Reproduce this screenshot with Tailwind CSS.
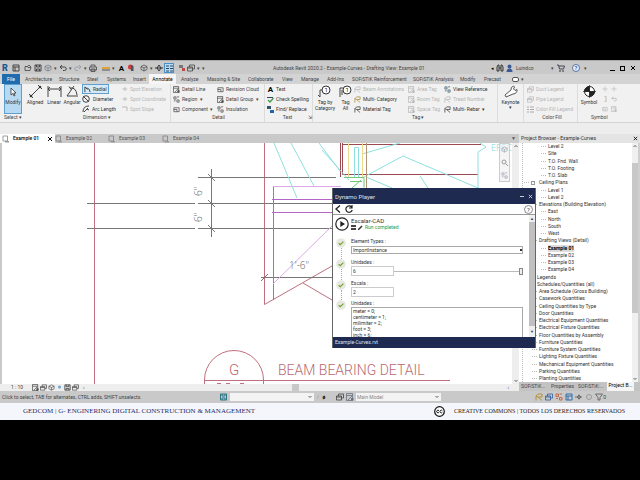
<!DOCTYPE html>
<html lang="es">
<head>
    <meta charset="UTF-8">
    <meta name="viewport" content="width=device-width, initial-scale=1.0">
    <script src="https://cdn.jsdelivr.net/npm/@tailwindcss/browser@4"></script>
    <title>Autodesk Revit 2020.2</title>
</head>
<body class="bg-black">

    <!-- icon set -->
    <svg class="hidden">
        <symbol id="doc" viewBox="0 0 8 8"><path d="M1 1h6v6H1zM1 3h6M3 3v4" fill="none" stroke="currentColor"/></symbol>
        <symbol id="open" viewBox="0 0 8 8"><path d="M1 6.500V2.500h2l1 1h3L6 6.500zM3 3l2-2 2 2" fill="none" stroke="currentColor" stroke-width=".8"/></symbol>
        <symbol id="save" viewBox="0 0 8 8"><path d="M1 1h6v6H1zM2.500 1v2h3V1M2.500 7V5h3v2" fill="none" stroke="currentColor"/></symbol>
        <symbol id="cube" viewBox="0 0 8 8"><path d="M4 1l3 1.500v3L4 7 1 5.500v-3zM1 2.500L4 4l3-1.500M4 4v3" fill="none" stroke="currentColor" stroke-width=".7"/></symbol>
        <symbol id="undo" viewBox="0 0 8 8"><path d="M3 1L1 3l2 2M1 3h4.500a1.500 1.500 0 0 1 0 3.500H4" fill="none" stroke="currentColor"/></symbol>
        <symbol id="redo" viewBox="0 0 8 8"><path d="M5 1l2 2-2 2M7 3H2.500a1.500 1.500 0 0 0 0 3.500H4" fill="none" stroke="currentColor"/></symbol>
        <symbol id="print" viewBox="0 0 8 8"><path d="M2 3V1h4v2M.500 3h7v3h-7zM2 5h4v2.500H2z" fill="none" stroke="currentColor" stroke-width=".8"/></symbol>
        <symbol id="rect" viewBox="0 0 8 8"><path d="M1 2h6v4.500H1zM1 4h3.500v2.500" fill="none" stroke="currentColor" stroke-width=".8"/></symbol>
        <symbol id="windows" viewBox="0 0 8 8"><path d="M.500 3h5v4h-5zM2.500 3V1h5v4h-2M.500 4h5" fill="none" stroke="currentColor" stroke-width=".8"/></symbol>
        <symbol id="detail" viewBox="0 0 8 8"><path d="M.500.500h6v7h-6zM.500 2.500h6M2 7l4-4" fill="none" stroke="currentColor" stroke-width=".8"/><path d="M5 5h2.500v2.500H5z" fill="currentColor"/></symbol>
        <symbol id="view" viewBox="0 0 8 8"><path d="M1 1h4.500v5H1z" fill="none" stroke="#777" stroke-width=".7"/><path d="M3 6h4v1.500H3z" fill="#999"/></symbol>
        <symbol id="spot" viewBox="0 0 8 8"><path d="M0 4h7M4 1.500v5M2 4l2-2 2 2-2 2z" fill="none" stroke="currentColor" stroke-width=".7"/></symbol>
        <symbol id="tag" viewBox="0 0 8 8"><path d="M1 7.500V3M1 3l2-2h4v3H3zM3 4l4 3.500" fill="none" stroke="currentColor" stroke-width=".8"/></symbol>
        <symbol id="pair" viewBox="0 0 8 8"><path d="M1 1h2.500v2.500H1zM4.500 4.500H7V7H4.500zM4.500 1H7M1 5.500h2" fill="none" stroke="currentColor" stroke-width=".8"/></symbol>
        <symbol id="check" viewBox="0 0 10 10"><circle cx="5" cy="5" r="4.800" fill="#e6e9e1"/><path d="M2.700 5.200L4.300 6.700 7.400 3.600" fill="none" stroke="#76a32c" stroke-width="1.200"/></symbol>
        <symbol id="plus" viewBox="0 0 8 8"><path d="M4 .500v7M.500 4h7" fill="none" stroke="currentColor" stroke-width=".8"/></symbol>
        <symbol id="up" viewBox="0 0 6 6"><path d="M1.500 4L3 2.500 4.500 4" fill="none" stroke="#555" stroke-width=".9"/></symbol>
        <symbol id="down" viewBox="0 0 6 6"><path d="M1.500 2L3 3.500 4.500 2" fill="none" stroke="#555" stroke-width=".9"/></symbol>
        <symbol id="close" viewBox="0 0 6 6"><path d="M1 1l4 4M5 1L1 5" fill="none" stroke="currentColor"/></symbol>
    </svg>

    <div class="min-h-screen flex flex-col pt-[60px] font-['Roboto','Open_Sans',sans-serif] text-[5px] leading-[7px] text-[#444] whitespace-nowrap">

        <!-- title bar -->
        <header class="bg-[#c9c9c9] h-[14px] flex items-center pt-px px-[2px] border-t border-[#aaa]">
            <div class="flex items-center w-[271px] shrink-0">
                <span class="w-[10px] text-[9px] font-black text-[#1d5a92]">R</span>
                <svg class="size-2 mr-1"><use href="#doc"/></svg>
                <svg class="size-2 mr-[2px]"><use href="#open"/></svg>
                <svg class="size-2 mr-[2px]"><use href="#save"/></svg>
                <svg class="size-2 text-gray-500"><use href="#cube"/></svg><span class="w-[7px] text-center">▾</span>
                <svg class="size-2"><use href="#undo"/></svg><span class="w-[7px] text-center">▾</span>
                <svg class="size-2 text-gray-400"><use href="#redo"/></svg><span class="w-[7px] text-center">▾</span>
                <svg class="size-2 mr-[5px]"><use href="#print"/></svg>
                <svg class="w-2 h-[5px]" viewBox="0 0 8 5"><path d="M0 1h8v2H0z" fill="#d9a53c"/><path d="M0 4h8" stroke="#555"/></svg><span class="w-[7px] text-center">▾</span>
                <span class="text-[8px] font-bold w-[9px] text-center text-black">A</span>
                <svg class="w-[6px] h-2 mx-[2px]" viewBox="0 0 6 8"><circle cx="2.500" cy="3" r="2.500" fill="#cf3a3a"/><path d="M3 1v6h2.500V2z" fill="#456"/></svg>
                <svg class="size-2 ml-1"><use href="#cube"/></svg><span class="w-[7px] text-center">▾</span>
                <svg class="size-2 mr-px" viewBox="0 0 8 8"><path d="M0 4h8M4 1l2 3-2 3-2-3z" fill="none" stroke="#333"/></svg>
                <span class="w-[10px] h-[10px] bg-[#b9dcf5] border border-[#4a90c8] flex items-center justify-center text-[#24476b]"><svg class="w-[7px] h-[7px]" viewBox="0 0 7 7"><path d="M0 1h3M4 1h3M0 3.500h3M4 3.500h3M0 6h3M4 6h3" stroke="currentColor"/></svg></span>
                <svg class="size-2 ml-1" viewBox="0 0 8 8"><path d="M1 1h4v3H1z" fill="#777"/><path d="M4 4h3v3H4z" fill="#c84545"/></svg>
                <svg class="size-2 ml-px"><use href="#windows"/></svg><span class="w-[7px] text-center">▾</span>
                <span>▾</span>
            </div>
            <h1>Autodesk Revit 2020.2 - Example-Curves - Drafting View: Example 01</h1>
            <div class="ml-auto flex items-center">
                <span class="text-black mr-[2px]">◂</span>
                <svg class="w-2 h-2 mr-[2px]" viewBox="0 0 8 8"><path d="M1 7V3l1-2h1v6zM5 7V1h1l1 2v4zM3 4h2" fill="none" stroke="#333"/></svg>
                <svg class="w-[7px] h-2" viewBox="0 0 7 8"><circle cx="3.500" cy="2.500" r="2" fill="#3c5b96"/><path d="M.500 8q0-3.500 3-3.500t3 3.500z" fill="#3c5b96"/></svg>
                <span class="ml-[3px] w-[35px]">Luindco</span>
                <span class="w-[6px]">▾</span>
                <svg class="size-2" viewBox="0 0 8 8"><path d="M0 1h1.500l1 4h4l1-3H2" fill="none" stroke="#445"/><circle cx="3" cy="7" r=".7"/><circle cx="6" cy="7" r=".7"/></svg>
                <svg class="size-2 ml-[7px]" viewBox="0 0 8 8"><circle cx="4" cy="4" r="3.500" fill="#eef" stroke="#345d8c" stroke-width=".8"/><text x="2.600" y="6" font-size="5.500" font-weight="bold" fill="#345d8c">?</text></svg>
                <span class="w-[30px] pl-1">▾</span>
                <button aria-label="Minimize" class="w-[5px] h-[5px] border-b border-black mr-[5px]"></button>
                <button aria-label="Restore" class="w-[5px] h-[5px] border border-black mr-[5px]"></button>
                <button aria-label="Close" class="size-[6px] text-black mr-[2px]"><svg class="size-full"><use href="#close"/></svg></button>
            </div>
        </header>

        <!-- ribbon tabs -->
        <nav class="bg-[#d3d3d3] h-[10px] flex items-stretch leading-[10px] pl-[2px]">
            <a href="#" class="w-[18px] bg-[#1f6cae] text-white text-center">File</a>
            <a href="#" class="w-[39px] pl-[5px]">Architecture</a>
            <a href="#" class="w-[28px]">Structure</a>
            <a href="#" class="w-[20px]">Steel</a>
            <a href="#" class="w-[26px]">Systems</a>
            <a href="#" class="w-[16px]">Insert</a>
            <a href="#" class="w-[27px] bg-[#f5f5f5] text-black text-center">Annotate</a>
            <a href="#" class="w-[31px] pl-[5px]">Analyze</a>
            <a href="#" class="w-[41px]">Massing &amp; Site</a>
            <a href="#" class="w-[34px]">Collaborate</a>
            <a href="#" class="w-[19px]">View</a>
            <a href="#" class="w-[26px]">Manage</a>
            <a href="#" class="w-[25px]">Add-Ins</a>
            <a href="#" class="w-[61px]">SOFiSTiK Reinforcement</a>
            <a href="#" class="w-[47px]">SOFiSTiK Analysis</a>
            <a href="#" class="w-[24px]">Modify</a>
            <a href="#" class="w-[28px]">Precast</a>
            <span class="flex items-center gap-[2px]"><i class="w-[7px] h-[5px] border border-[#555] rounded-[2px] bg-white"></i>▾</span>
        </nav>

        <!-- ribbon -->
        <section class="bg-[#ededed] h-[50px]">
            <div class="h-[39px] bg-[#f1f1f1] border-b border-[#d4d4d4] flex">

                <div class="w-[24px] shrink-0 flex flex-col pl-1">
                    <button class="w-[18px] h-[30px] bg-[#b8d9f2] border border-[#5e9fce] flex flex-col items-center text-[#334]">
                        <svg class="w-[8px] h-[10px] mt-[2px] mb-[2px]" viewBox="0 0 8 10"><path d="M2 1v7l1.800-1.600L5 9l1-.500-1.200-2.500H7z" fill="#fff" stroke="#333" stroke-width=".8"/></svg>
                        Modify
                    </button>
                    <span>Select ▾</span>
                </div>

                <div class="w-[147px] shrink-0 flex flex-col border-r border-[#dcdcdc]">
                    <div class="h-[30px] flex">
                        <button class="w-[22px] flex flex-col items-center text-[#333]"><svg class="w-[13px] h-[13px] mt-px mb-px" viewBox="0 0 13 13"><path d="M2 11l9-9M0 9l4 4M9 0l4 4" fill="none" stroke="#444"/><circle cx="2" cy="11" r="1.300" fill="#333"/><circle cx="11" cy="2" r="1.300" fill="#333"/></svg>Aligned</button>
                        <button class="w-[16px] flex flex-col items-center text-[#333]"><svg class="w-[15px] h-[13px] mt-px mb-px" viewBox="0 0 15 13"><path d="M1 1v11M14 1v11M1 4h13M3 2L1 4l2 2M12 2l2 2-2 2" fill="none" stroke="#444"/></svg>Linear</button>
                        <button class="w-[20px] flex flex-col items-center text-[#333]"><svg class="w-[13px] h-[13px] mt-px mb-px" viewBox="0 0 13 13"><path d="M8 1L1 11h11M4 3q6-1 7 7M3 1.500l2 3" fill="none" stroke="#444"/></svg>Angular</button>
                        <div class="w-[37px] grid grid-rows-3 items-center text-[#333]">
                            <button class="flex items-center w-[27px] h-[10px] bg-[#d5e9f8] border border-[#5e9fce] pl-px"><svg class="w-[7px] h-[7px] mr-[2px]" viewBox="0 0 8 8"><path d="M1 7V1l3 3M3 2q4 1 4 5" fill="none" stroke="#333"/></svg>Radial</button>
                            <button class="flex items-center"><svg class="size-2 mr-[3px]" viewBox="0 0 8 8"><circle cx="4" cy="4" r="3.300" fill="none" stroke="#444"/><path d="M1 1l6 6" stroke="#444"/></svg>Diameter</button>
                            <button class="flex items-center"><svg class="size-2 mr-[2px]" viewBox="0 0 8 8"><path d="M1 7q0-6 6-6M2 7l4-4M5 4l2 1" fill="none" stroke="#444"/></svg>Arc Length</button>
                        </div>
                        <div class="grid grid-rows-3 items-center text-[#b5b5b5] pl-[3px]">
                            <button disabled class="flex items-center gap-[2px]"><svg class="w-[6px] h-[6px]"><use href="#spot"/></svg>Spot Elevation</button>
                            <button disabled class="flex items-center gap-[2px]"><svg class="w-[6px] h-[6px]"><use href="#spot"/></svg>Spot Coordinate</button>
                            <button disabled class="flex items-center gap-[2px]"><svg class="w-[6px] h-[6px]" viewBox="0 0 6 6"><path d="M0 1h5v4" fill="none" stroke="#bbb"/></svg>Spot Slope</button>
                        </div>
                    </div>
                    <span class="text-center">Dimension ▾</span>
                </div>

                <div class="w-[94px] shrink-0 flex flex-col border-r border-[#dcdcdc] pl-[2px]">
                    <div class="h-[30px] flex">
                        <div class="w-[44px] grid grid-rows-3 items-center">
                            <button class="flex items-center gap-[2px]"><svg class="w-[7px] h-[7px]"><use href="#detail"/></svg>Detail Line</button>
                            <button class="flex items-center gap-[2px]"><svg class="w-[7px] h-[7px]"><use href="#pair"/></svg>Region&nbsp; ▾</button>
                            <button class="flex items-center gap-[2px]"><svg class="w-[7px] h-[7px]"><use href="#rect"/></svg>Component&nbsp; ▾</button>
                        </div>
                        <div class="grid grid-rows-3 items-center">
                            <button class="flex items-center gap-[2px]"><svg class="w-[7px] h-[7px]"><use href="#rect"/></svg>Revision Cloud</button>
                            <button class="flex items-center gap-[2px]"><svg class="w-[7px] h-[7px]"><use href="#detail"/></svg>Detail Group&nbsp; ▾</button>
                            <button class="flex items-center gap-[2px]"><svg class="w-[7px] h-[7px]"><use href="#pair"/></svg>Insulation</button>
                        </div>
                    </div>
                    <span class="text-center">Detail</span>
                </div>

                <div class="w-[48px] shrink-0 flex flex-col border-r border-[#dcdcdc] pl-[2px]">
                    <div class="h-[30px] grid grid-rows-3 items-center text-[#333]">
                        <button class="flex items-center gap-[2px]"><b class="text-[8px] w-[7px] text-black">A</b>Text</button>
                        <button class="flex items-center gap-[2px]"><svg class="w-[7px] h-[7px]" viewBox="0 0 7 7"><path d="M0 1.500h6" stroke="#345"/><path d="M1 4l2 2 3.500-4" fill="none" stroke="#3c9a4c" stroke-width="1.200"/></svg>Check Spelling</button>
                        <button class="flex items-center gap-[2px]"><svg class="w-[7px] h-[7px]" viewBox="0 0 7 7"><path d="M0 0h4v3H0z" fill="#356"/><path d="M3 4h4v3H3z" fill="#26a"/></svg>Find/ Replace</button>
                    </div>
                    <span class="flex"><span class="flex-1 text-center">Text</span>⇲</span>
                </div>

                <div class="w-[185px] shrink-0 flex flex-col border-r border-[#dcdcdc]">
                    <div class="h-[30px] flex">
                        <button class="w-[24px] flex flex-col items-center leading-[6px] text-[#333]"><svg class="w-[14px] h-[15px]" viewBox="0 0 14 15"><circle cx="8" cy="6" r="4" fill="#fff" stroke="#333"/><path d="M4 6H2v7M0 11l2 2" fill="none" stroke="#444"/><text x="6.500" y="8" font-size="6" fill="#222">1</text></svg>Tag by<br>Category</button>
                        <button class="w-[17px] flex flex-col items-center leading-[6px] text-[#333]"><svg class="w-[14px] h-[15px]" viewBox="0 0 14 15"><circle cx="8" cy="6" r="4" fill="#fff" stroke="#333"/><path d="M4 4H1v9M3 6v5" fill="none" stroke="#444"/><text x="6.500" y="8" font-size="6" fill="#222">1</text></svg>Tag<br>All</button>
                        <div class="w-[54px] grid grid-rows-3 items-center text-[#333]">
                            <button disabled class="flex items-center gap-[2px] text-[#b5b5b5]"><svg class="w-[7px] h-[7px]"><use href="#tag"/></svg>Beam Annotations</button>
                            <button class="flex items-center gap-[2px]"><svg class="w-[7px] h-[7px] text-[#a8842c]"><use href="#tag"/></svg>Multi- Category</button>
                            <button class="flex items-center gap-[2px]"><svg class="w-[7px] h-[7px]"><use href="#tag"/></svg>Material Tag</button>
                        </div>
                        <div class="w-[36px] grid grid-rows-3 items-center text-[#b5b5b5]">
                            <button disabled class="flex items-center gap-[2px]"><svg class="w-[7px] h-[7px]"><use href="#detail"/></svg>Area Tag</button>
                            <button disabled class="flex items-center gap-[2px]"><svg class="w-[7px] h-[7px]"><use href="#detail"/></svg>Room Tag</button>
                            <button disabled class="flex items-center gap-[2px]"><svg class="w-[7px] h-[7px]"><use href="#detail"/></svg>Space Tag</button>
                        </div>
                        <div class="grid grid-rows-3 items-center text-[#333]">
                            <button class="flex items-center gap-[2px]"><svg class="w-[7px] h-[7px] text-[#356]"><use href="#pair"/></svg>View Reference</button>
                            <button disabled class="flex items-center gap-[2px] text-[#b5b5b5]"><svg class="w-[7px] h-[7px]"><use href="#tag"/></svg>Tread Number</button>
                            <button class="flex items-center gap-[2px]"><svg class="w-[7px] h-[7px]"><use href="#tag"/></svg>Multi- Rebar&nbsp; ▾</button>
                        </div>
                    </div>
                    <span class="pl-[99px]">Tag ▾</span>
                </div>

                <div class="w-[26px] shrink-0 border-r border-[#dcdcdc]">
                    <button class="w-full flex flex-col items-center leading-[5px] text-[#333]"><svg class="w-[14px] h-[13px] mt-px mb-[2px]" viewBox="0 0 14 13"><path d="M2 12L1 10l6-5q-.500-3 2.500-4l1 1-1 2 1.500 1.500 2-1q.500 4-4 4.500z" fill="#fff" stroke="#444" stroke-width=".9"/></svg>Keynote<span>▾</span></button>
                </div>

                <div class="w-[54px] shrink-0 flex flex-col border-r border-[#dcdcdc] pl-[3px]">
                    <div class="h-[30px] grid grid-rows-3 items-center text-[#b5b5b5]">
                        <button disabled class="flex items-center gap-[2px]"><svg class="w-[7px] h-[7px]"><use href="#windows"/></svg>Duct Legend</button>
                        <button disabled class="flex items-center gap-[2px]"><svg class="w-[7px] h-[7px]"><use href="#windows"/></svg>Pipe Legend</button>
                        <button disabled class="flex items-center gap-[2px]"><svg class="w-[7px] h-[7px]" viewBox="0 0 7 7"><path d="M0 1h2M3 1h4M0 3.500h2M3 3.500h4M0 6h2M3 6h4" stroke="#aaa"/></svg>Color Fill Legend</button>
                    </div>
                    <span class="text-center">Color Fill</span>
                </div>

                <div class="flex-1 flex flex-col">
                    <div class="h-[30px] flex text-[#b5b5b5]">
                        <button class="w-[22px] flex flex-col items-center text-[#333]"><svg class="w-[13px] h-[13px] my-px" viewBox="0 0 13 13"><circle cx="6.500" cy="6.500" r="5" fill="#fff" stroke="#222"/><path d="M6.500 6.500V1.500a5 5 0 0 0-5 5zM6.500 6.500v5a5 5 0 0 0 5-5zM6.500 0v13M0 6.500h13" fill="#222" stroke="#222" stroke-width=".7"/></svg>Symbol</button>
                        <div class="grid grid-cols-2 grid-rows-3 gap-x-[3px] items-center pl-[2px]">
                            <svg class="w-[6px] h-[6px]"><use href="#plus"/></svg><svg class="w-[6px] h-[6px]"><use href="#plus"/></svg>
                            <svg class="w-[6px] h-[6px]" viewBox="0 0 6 6"><path d="M2 0h2v6H2" fill="none" stroke="#bbb"/></svg><svg class="w-[6px] h-[6px]"><use href="#undo"/></svg>
                            <svg class="w-[6px] h-[6px]"><use href="#rect"/></svg><svg class="w-[6px] h-[6px]"><use href="#detail"/></svg>
                        </div>
                    </div>
                    <span class="pl-[13px]">Symbol</span>
                </div>
            </div>
        </section>

        <!-- workspace -->
        <main class="relative flex bg-[#c9c9c9]">
            <div class="flex-1 min-w-0 flex flex-col">
                <nav class="h-[9px] flex items-center text-[#555]">
                    <a href="#" class="w-[55px] h-full flex items-center gap-[3px] pl-[2px] bg-white text-black font-medium"><svg class="size-2"><use href="#view"/></svg>Example 01<svg class="w-[6px] h-[6px] ml-auto mr-[2px]"><use href="#close"/></svg></a>
                    <a href="#" class="w-[53px] flex items-center gap-[3px]"><svg class="size-2"><use href="#view"/></svg>Example 02</a>
                    <a href="#" class="w-[54px] flex items-center gap-[3px]"><svg class="size-2"><use href="#view"/></svg>Example 03</a>
                    <a href="#" class="flex items-center gap-[3px]"><svg class="size-2"><use href="#view"/></svg>Example 04</a>
                    <span class="ml-auto mr-[3px]">▼</span>
                </nav>
                <div class="h-[241px] flex">
                    <div class="relative flex-1 bg-white border-l-2 border-[#c9c9c9]">
                        <!-- drafting view, one unit per pixel -->
                        <svg class="w-full h-full" fill="none" stroke-width="1">
                            <g transform="translate(-2 -143)">
                                <g stroke="#c0707e">
                                    <path d="M94.500 143V384M264.500 143V304.500L332 266M303 283l29 17"/>
                                    <path d="M204.500 384v-4a29.500 29.500 0 0 1 59 0v4M204 380.500H450"/>
                                </g>
                                <path d="M340.500 143v34M342.500 144.500H481M342.500 143v31.500H478" stroke="#9a4a50"/>
                                <g stroke="#777">
                                    <path d="M198 177.500h138M87 203.500h108M198 203.500h134M87 228.500h108M198 228.500h134M211.500 169v68M261 277.500h71"/>
                                    <path d="M208 174l7 7M208 200l7 7M208 225l7 7M261 281l7-7"/>
                                </g>
                                <path d="M273.500 300V186.500M272 199.500h60M272 212.500h60" stroke="#b565c4"/>
                                <path d="M273 186.500h68M273 284l59-58" stroke="#dcaae4"/>
                                <path d="M274 143l23 55M291 143l23 43M319 143l21 28M322 150l27 30M362 154l38-11M362 178l41-22 82 35M366 177l26 11M420 176l8 12M480 143l6 4-8 5v37M354.500 147.500h4v30h-4z" stroke="#8fdfe0"/>
                                <path d="M348.500 143v34M362.500 143v34" stroke="#ecd98a"/>
                                <path d="M366.500 143v45" stroke="#b3927a"/>
                                <path d="M344 177.500h20v10M350 181.500h12M352 188l9-8" stroke="#70c674"/>
                                <g stroke="none" class="font-['Open_Sans','Noto_Sans',sans-serif] font-light">
                                    <text x="278" y="375" font-size="14" fill="#b86a70" class="font-['Roboto',sans-serif]">BEAM BEARING DETAIL</text>
                                    <text x="229" y="375" font-size="15" fill="#b86a70" class="font-['Roboto',sans-serif]">G</text>
                                    <text x="289" y="269" font-size="10" fill="#666">1'-6"</text>
                                    <text transform="translate(202 196) rotate(-90)" font-size="10" fill="#666">6"</text>
                                    <text transform="translate(202 222) rotate(-90)" font-size="10" fill="#666">6"</text>
                                    <text x="491" y="151" font-size="9" fill="#7fd5d8">EREC</text>
                                </g>
                                <path d="M217 383.500h4M226 383.500h4M240 383.500h4" stroke="#c0707e"/>
                            </g>
                        </svg>
                        <div class="absolute right-[2px] top-0 w-[11px] h-[39px] bg-[#eee]/60 border border-[#ccc] flex flex-col items-center justify-between py-[2px]">
                            <svg class="w-[7px] h-[7px] text-gray-400"><use href="#cube"/></svg>
                            <svg class="w-[7px] h-[7px]" viewBox="0 0 7 7"><circle cx="3" cy="3" r="2" fill="none" stroke="#999"/><path d="M4.500 4.500L7 7" stroke="#999"/></svg>
                            <svg class="w-[7px] h-[7px] text-gray-400"><use href="#pair"/></svg>
                        </div>
                    </div>
                    <div class="w-[7px] bg-[#eee] flex flex-col justify-between items-center">
                        <svg class="w-[6px] h-[6px]"><use href="#up"/></svg>
                        <svg class="w-[6px] h-[6px]"><use href="#down"/></svg>
                    </div>
                </div>
                <div class="h-[7px] bg-[#eee] flex items-center pl-[11px] text-[#444]">
                    <span class="w-[21px]">1 : 10</span>
                    <span class="flex gap-px">
                        <svg class="w-[7px] h-[7px]"><use href="#detail"/></svg>
                        <svg class="w-[7px] h-[7px]"><use href="#windows"/></svg>
                        <svg class="w-[7px] h-[7px]"><use href="#cube"/></svg>
                        <svg class="w-[7px] h-[7px]" viewBox="0 0 7 7"><circle cx="3.500" cy="3" r="1.500" fill="#6aa5d5"/></svg>
                        <svg class="w-[7px] h-[7px]"><use href="#save"/></svg>
                        <svg class="w-[7px] h-[7px]"><use href="#windows"/></svg>
                    </span>
                    <span class="ml-[4px]">‹</span>
                    <i class="ml-auto w-[7px] h-full bg-[#c8c8c8]"></i>
                    <span class="w-[210px] text-right">›</span>
                    <span class="w-[10px]"></span>
                </div>
            </div>

            <!-- project browser -->
            <aside class="w-[121px] shrink-0 flex flex-col">
                <div class="h-[9px] bg-[#e4e4e4] flex items-center justify-between pl-[2px] pr-[2px] text-[#333]">Project Browser - Example-Curves<svg class="w-[5px] h-[5px] text-black"><use href="#close"/></svg></div>
                <div class="h-[239px] bg-white flex border-r-2 border-[#d0d0d0]">
                    <ul class="flex-1 flex flex-col ml-[3px] border-l border-dotted border-[#bbb] text-[#333] [&>li]:flex-1 [&>li]:min-h-0 [&>li]:flex [&>li]:items-center [&>li]:before:w-[5px] [&>li]:before:mr-[2px] [&>li]:before:border-t [&>li]:before:border-dotted [&>li]:before:border-[#bbb]">
                        <li class="pl-[18px]">Level 2</li>
                        <li class="pl-[18px]">Site</li>
                        <li class="pl-[18px]">T.O. Fnd. Wall</li>
                        <li class="pl-[18px]">T.O. Footing</li>
                        <li class="pl-[18px]">T.O. Slab</li>
                        <li class="pl-[1px]"><i class="w-1 h-1 border border-[#999] mr-1"></i>Ceiling Plans</li>
                        <li class="pl-[18px]">Level 1</li>
                        <li class="pl-[18px]">Level 2</li>
                        <li class="pl-[9px]">Elevations (Building Elevation)</li>
                        <li class="pl-[18px]">East</li>
                        <li class="pl-[18px]">North</li>
                        <li class="pl-[18px]">South</li>
                        <li class="pl-[18px]">West</li>
                        <li class="pl-[9px]">Drafting Views (Detail)</li>
                        <li class="pl-[18px]"><b class="bg-[#dcdcdc] text-black">Example 01</b></li>
                        <li class="pl-[18px]">Example 02</li>
                        <li class="pl-[18px]">Example 03</li>
                        <li class="pl-[18px]">Example 04</li>
                        <li class="pl-[7px]">Legends</li>
                        <li class="pl-[7px]">Schedules/Quantities (all)</li>
                        <li class="pl-[9px]">Area Schedule (Gross Building)</li>
                        <li class="pl-[9px]">Casework Quantities</li>
                        <li class="pl-[9px]">Ceiling Quantities by Type</li>
                        <li class="pl-[9px]">Door Quantities</li>
                        <li class="pl-[9px]">Electrical Equipment Quantities</li>
                        <li class="pl-[9px]">Electrical Fixture Quantities</li>
                        <li class="pl-[9px]">Floor Quantities by Assembly</li>
                        <li class="pl-[9px]">Furniture Quantities</li>
                        <li class="pl-[9px]">Furniture System Quantities</li>
                        <li class="pl-[9px]">Lighting Fixture Quantities</li>
                        <li class="pl-[9px]">Mechanical Equipment Quantities</li>
                        <li class="pl-[9px]">Parking Quantities</li>
                        <li class="pl-[9px]">Planting Quantities</li>
                    </ul>
                    <div class="w-[6px] bg-[#f0f0f0] flex flex-col">
                        <svg class="w-[6px] h-[6px] mb-[14px]"><use href="#up"/></svg>
                        <i class="h-[150px] mb-auto bg-[#c8c8c8]"></i>
                        <svg class="w-[6px] h-[6px]"><use href="#down"/></svg>
                    </div>
                </div>
                <nav class="h-[9px] bg-[#c3c3c3] flex items-center">
                    <a href="#" class="w-[32px] pl-[2px]">SOFiSTiK...</a>
                    <a href="#" class="w-[27px]">Properties</a>
                    <a href="#" class="w-[29px]">SOFiSTiK:...</a>
                    <a href="#" class="w-[27px] h-full bg-[#f5f5f5] text-center text-black">Project B...</a>
                </nav>
            </aside>

            <!-- Dynamo Player window -->
            <div class="absolute left-[332px] top-[54px] w-[204px] h-[160px] flex flex-col bg-white border-x border-[#666] text-[#333]">
                <div class="h-[16px] bg-[#1f2a50] text-[#dfe3ee] text-[6px] flex items-center pl-[2px] pr-[1px]">
                    Dynamo Player
                    <button aria-label="Minimize" class="ml-auto w-1 border-b border-[#ccc] mr-[4px]"></button>
                    <button aria-label="Close" class="w-[5px] h-[5px] mr-px"><svg class="size-full"><use href="#close"/></svg></button>
                </div>
                <div class="h-[11px] flex items-center border-b border-[#999] pl-[2px] pr-[2px]">
                    <svg class="w-[6px] h-2 mr-[4px]" viewBox="0 0 6 8"><path d="M5 .500L1 4l4 3.500" fill="none" stroke="#222" stroke-width="1.300"/></svg>
                    <svg class="size-2" viewBox="0 0 8 8"><path d="M6.500 2A3.200 3.200 0 1 0 7.200 5M7 0v3H4" fill="none" stroke="#222" stroke-width="1.200"/></svg>
                    <svg class="w-[9px] h-[9px] ml-auto" viewBox="0 0 9 9"><circle cx="4.500" cy="4.500" r="4" fill="none" stroke="#555" stroke-width=".7"/><text x="3" y="6.800" font-size="6" fill="#444">?</text></svg>
                </div>
                <div class="h-[122px] flex overflow-hidden">
                    <div class="flex-1 pl-[2px] pr-[6px]">
                        <div class="h-[23px] flex items-start pt-[2px]">
                            <svg class="w-[14px] h-[14px] mr-[2px]" viewBox="0 0 14 14"><circle cx="7" cy="7" r="6.200" fill="#fff" stroke="#222" stroke-width="1.200"/><path d="M5.300 4v6L10 7z" fill="#222"/></svg>
                            <div>
                                <h2 class="text-[6px]">Escalar-CAD</h2>
                                <p class="flex items-center gap-[2px] text-[#2c9a36] leading-[6px]"><svg class="w-[5px] h-[5px]" viewBox="0 0 5 5"><path d="M0 0h5v2H0zM0 3h5v2H0z" fill="#444"/></svg><svg class="w-[5px] h-[5px]" viewBox="0 0 5 5"><path d="M0 5l4-4" stroke="#333" stroke-width="1.500"/></svg>Run completed</p>
                            </div>
                        </div>
                        <div class="flex h-[21px]">
                            <div class="w-4 shrink-0 flex flex-col pl-px"><svg class="w-[10px] h-[10px]"><use href="#check"/></svg><i class="flex-1 ml-[5px] border-l border-dotted border-[#aaa]"></i></div>
                            <div class="flex-1"><label for="types" class="block h-2">Element Types :</label>
                            <select id="types" class="appearance-none block w-full h-2 border border-[#aaa] pl-px leading-[6px] bg-[linear-gradient(#333,#333)] bg-[length:3px_2px] bg-no-repeat bg-[position:168px_2px]"><option>ImportInstance</option></select></div>
                        </div>
                        <div class="flex h-[21px]">
                            <div class="w-4 shrink-0 flex flex-col pl-px"><svg class="w-[10px] h-[10px]"><use href="#check"/></svg><i class="flex-1 ml-[5px] border-l border-dotted border-[#aaa]"></i></div>
                            <div class="flex-1"><label for="unit" class="block h-[7px]">Unidades :</label>
                            <div class="flex items-center"><input id="unit" value="6" class="w-[43px] h-[10px] border border-[#ccc] pl-px"><input type="range" aria-label="Unidades" value="100" class="appearance-none flex-1 min-w-0 h-2 bg-[linear-gradient(#bbb,#bbb)] bg-[length:100%_1px] bg-center bg-no-repeat [&::-webkit-slider-thumb]:appearance-none [&::-webkit-slider-thumb]:w-1 [&::-webkit-slider-thumb]:h-[7px] [&::-webkit-slider-thumb]:bg-[#eee] [&::-webkit-slider-thumb]:border [&::-webkit-slider-thumb]:border-[#888]"></div></div>
                        </div>
                        <div class="flex h-[20px]">
                            <div class="w-4 shrink-0 flex flex-col pl-px"><svg class="w-[10px] h-[10px]"><use href="#check"/></svg><i class="flex-1 ml-[5px] border-l border-dotted border-[#aaa]"></i></div>
                            <div class="flex-1"><label for="scale" class="block h-[7px]">Escala :</label>
                            <input id="scale" value="2" class="block w-[43px] h-[10px] border border-[#ccc] pl-px"></div>
                        </div>
                        <div class="flex">
                            <div class="w-4 shrink-0 pl-px"><svg class="w-[10px] h-[10px]"><use href="#check"/></svg></div>
                            <div class="flex-1"><label for="units" class="block h-[7px]">Unidades :</label>
                            <textarea id="units" class="block w-full h-[34px] border border-[#aaa] px-px leading-[6px] resize-none overflow-hidden">meter = 0;
centimeter = 1;
milimiter = 2;
foot = 3;
inch = 6;</textarea></div>
                        </div>
                    </div>
                    <div class="w-[6px] bg-[#eee] flex flex-col">
                        <span class="h-[7px] text-center text-[4px]">▲</span>
                        <i class="flex-1 bg-[#c0c0c0]"></i>
                        <span class="h-[11px] text-center text-[4px] leading-[11px]">▼</span>
                    </div>
                </div>
                <div class="h-[11px] bg-[#1f2a50] text-[#dfe3ee] flex items-center pl-[2px]">Example-Curves.rvt</div>
            </div>
        </main>

        <!-- status bar -->
        <div class="h-[12px] bg-[#c9c9c9] flex items-center pl-[2px]">
            <span class="w-[217px]">Click to select, TAB for alternates, CTRL adds, SHIFT unselects.</span>
            <svg class="w-[9px] h-2 text-[#2c7787] mr-[2px]"><use href="#save"/></svg>
            <span class="relative"><select aria-label="Workset" class="appearance-none block w-[84px] h-2 bg-[#f3f3f3]"><option></option></select><svg class="absolute right-px top-px size-[6px] pointer-events-none"><use href="#down"/></svg></span>
            <span class="w-[22px] pl-[3px] text-[#888]">∕ &nbsp; <b class="text-black">ø</b></span>
            <svg class="size-2 mr-[2px]"><use href="#windows"/></svg>
            <svg class="size-2 text-gray-500 mr-[2px]"><use href="#detail"/></svg>
            <span class="relative"><select aria-label="Design option" class="appearance-none block w-[85px] h-2 bg-[#f3f3f3] text-[#888] pl-px leading-[8px]"><option>Main Model</option></select><svg class="absolute right-px top-px size-[6px] pointer-events-none"><use href="#down"/></svg></span>
            <div class="ml-auto mr-[34px] flex items-center gap-[2px]">
                <svg class="size-2 text-[#b0861c]"><use href="#tag"/></svg>
                <svg class="size-2 text-[#315e9c]"><use href="#windows"/></svg>
                <svg class="size-2 text-[#c3542c]"><use href="#pair"/></svg>
                <svg class="size-2 text-[#2f6fae]"><use href="#doc"/></svg>
                <svg class="size-2 text-[#555]"><use href="#spot"/></svg>
                <svg class="size-2" viewBox="0 0 8 8"><circle cx="4" cy="4" r="2.500" fill="none" stroke="#999"/></svg>
                <span class="flex items-center"><svg class="size-2" viewBox="0 0 8 8"><path d="M.500 1h7L5 4.500V7H3V4.500z" fill="none" stroke="#555" stroke-width=".8"/></svg>0</span>
            </div>
        </div>

        <footer class="h-[17px] bg-[#f5f6fb] flex items-center pl-[23px] pr-[15px] font-['Liberation_Serif',serif]">
            <span class="text-[7px] text-[#1e2c66]">GEDCOM | G- ENGINERING DIGITAL CONSTRUCTION &amp; MANAGEMENT</span>
            <svg class="w-[11px] h-[11px] ml-auto mr-[9px]" viewBox="0 0 11 11"><circle cx="5.500" cy="5.500" r="4.800" fill="#fff" stroke="#111" stroke-width="1.200"/><path d="M5 4.700A1.300 1.300 0 1 0 5 6.300M8.300 4.700A1.300 1.300 0 1 0 8.300 6.300" fill="none" stroke="#111"/></svg>
            <span class="text-[6px] text-[#222]">CREATIVE COMMONS | TODOS LOS DERECHOS RESERVADOS</span>
        </footer>
    </div>

</body>
</html>
